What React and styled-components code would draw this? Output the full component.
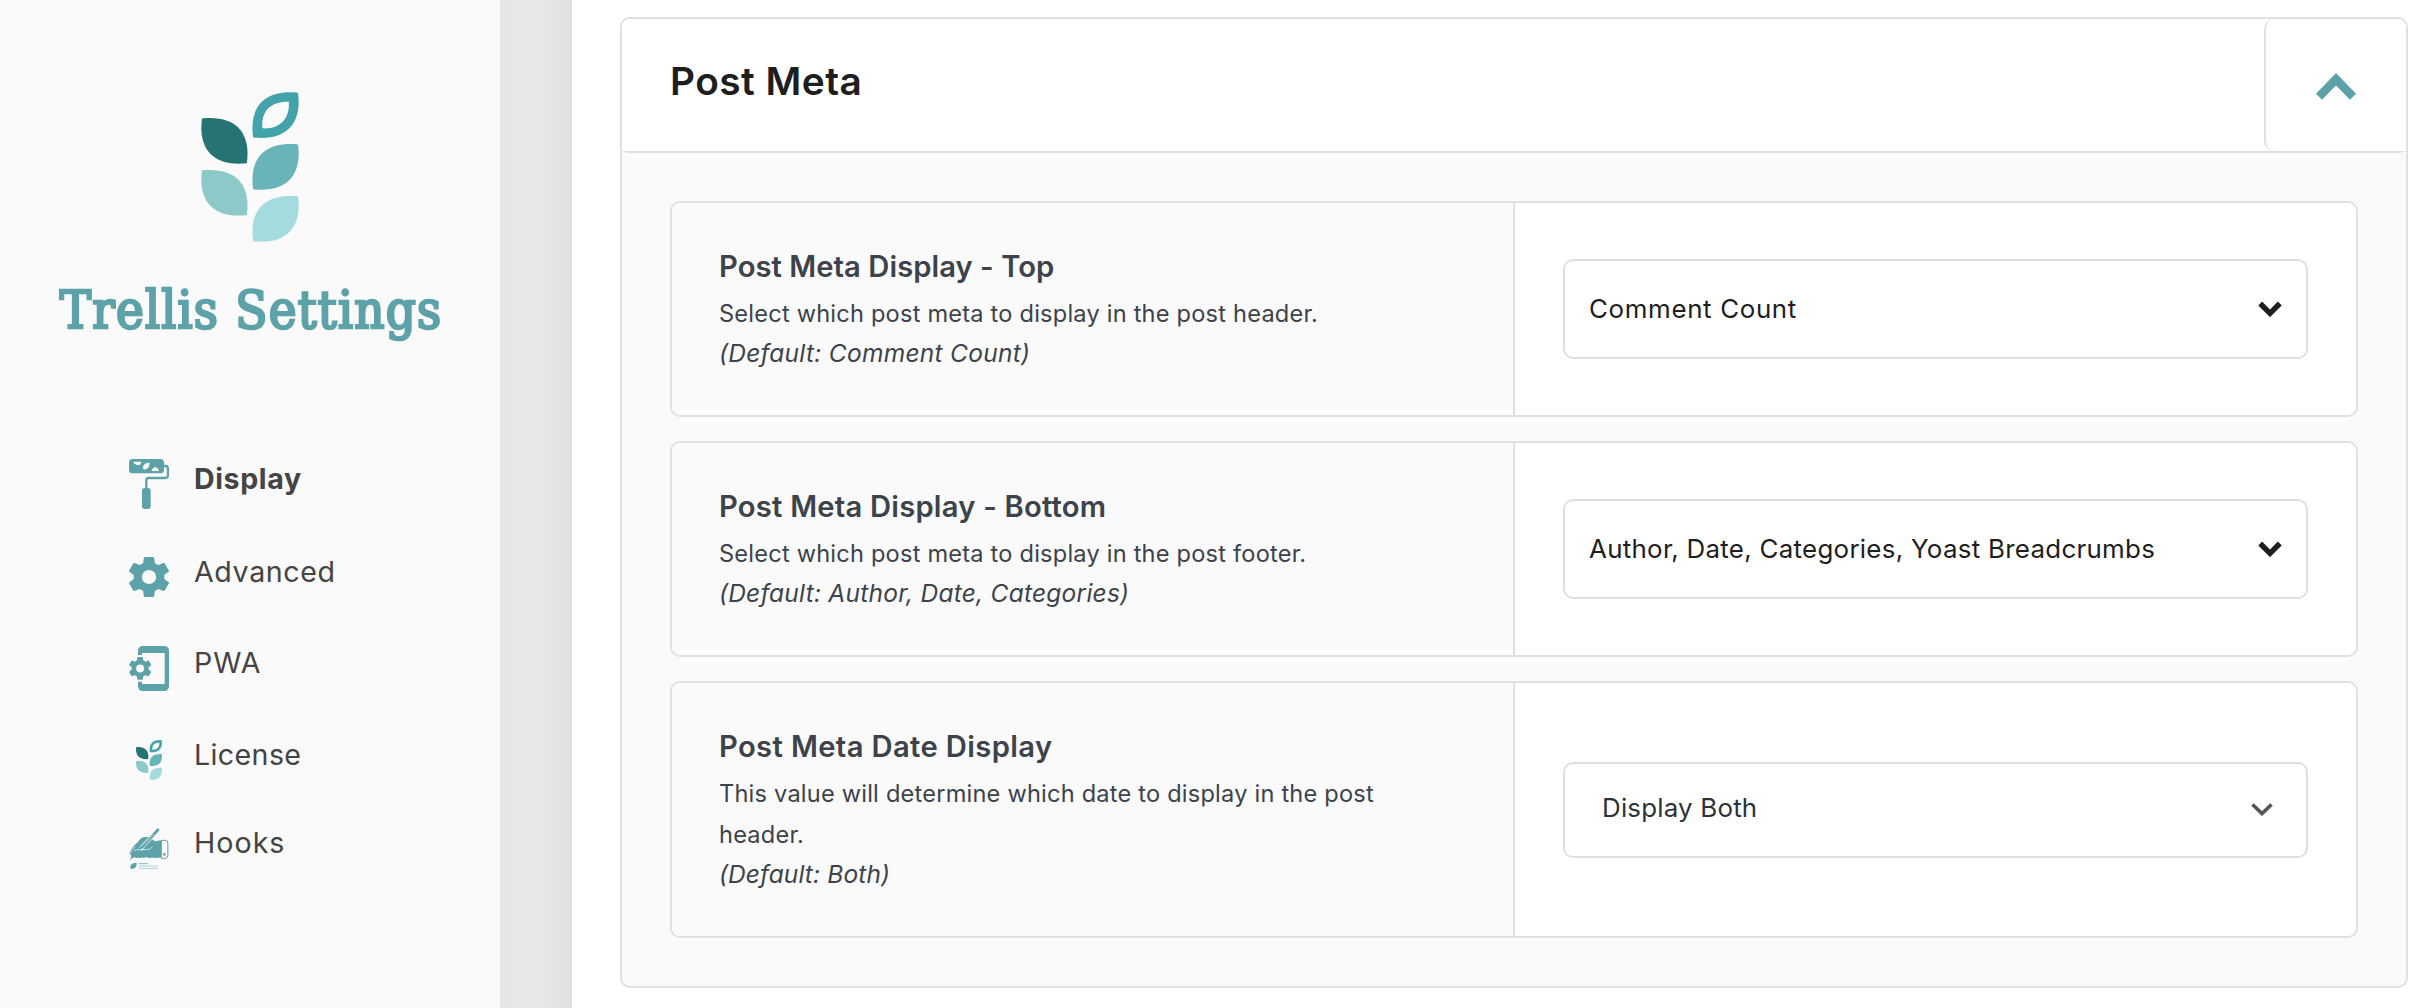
import React from "react";
import styled, { createGlobalStyle } from "styled-components";

const sans = '"Inter", "Open Sans", sans-serif';
const slab = '"DejaVu Serif Condensed", "DejaVu Serif", serif';
const teal = "#5da2a9";
const line = "#e0e0e0";
const soft = "#fafafa";

const GlobalStyle = createGlobalStyle`
  *, *::before, *::after { box-sizing: border-box; }
  body { margin: 0; background: #fff; font-family: ${sans}; }
  h1, h2, h3, p, ul { margin: 0; padding: 0; }
  svg { display: block; }
`;

const Page = styled.div`
  display: flex;
  height: 1008px;
  overflow: hidden;
`;

const Sidebar = styled.aside`
  display: flex;
  flex-direction: column;
  align-items: center;
  flex: 0 0 500px;
  padding-top: 92px;
  background: ${soft};
`;

const Gutter = styled.div`
  flex: 0 0 72px;
  background: linear-gradient(90deg, #e6e6e6 0%, #e8e8e8 50%, #e5e5e5 70%, #e0e0e0 100%);
`;

const BrandTitle = styled.h1`
  margin-top: 38px;
  padding-left: 2px;
  color: ${teal};
  font: 400 52.2px/60px ${slab};
  letter-spacing: 1.25px;
  -webkit-text-stroke: 2.5px ${teal};
  white-space: nowrap;
`;

const Nav = styled.ul`
  display: flex;
  flex-direction: column;
  align-self: stretch;
  padding: 119px 0 0 129px;
  list-style: none;
`;

const NavItem = styled.li`
  display: flex;
  align-items: center;
  gap: 25px;
  margin-bottom: ${(p) => p.$space}px;
`;

const NavIcon = styled.span`
  display: flex;
  justify-content: center;
  flex: 0 0 40px;
`;

const NavLabel = styled.span`
  padding-bottom: 11px;
  color: #444;
  font-size: 28.6px;
  line-height: 28px;
  font-weight: ${(p) => (p.$active ? 700 : 400)};
  letter-spacing: ${(p) => p.$track}px;
`;

const Main = styled.main`
  flex: 1;
  min-width: 0;
  padding: 17px 22px 20px 48px;
`;

const Panel = styled.section`
  border: 2px solid ${line};
  border-radius: 10px;
  background: ${soft};
  overflow: hidden;
`;

const HeaderBack = styled.div`
  background: #fff;
`;

const PanelHeader = styled.header`
  display: flex;
  justify-content: space-between;
  height: 134px;
  padding-left: 48px;
  border-bottom: 2px solid ${line};
  border-radius: 0 0 12px 12px / 0 0 2px 2px;
`;

const PanelTitle = styled.h2`
  align-self: center;
  padding-bottom: 8px;
  color: #1e1e1e;
  font-size: 38.8px;
  line-height: 48px;
  font-weight: 600;
  letter-spacing: 0.48px;
`;

const Toggle = styled.button`
  display: flex;
  align-items: center;
  justify-content: center;
  width: 142px;
  padding: 3px 0 0;
  border: 0;
  border-left: 2px solid ${line};
  border-radius: 10px;
  background: none;
`;

const PanelBody = styled.div`
  display: flex;
  flex-direction: column;
  gap: 24px;
  padding: 48px;
`;

const Row = styled.div`
  display: grid;
  grid-template-columns: 843px 1fr;
  border: 2px solid ${line};
  border-radius: 10px;
  background: #fff;
  overflow: hidden;
`;

const Description = styled.div`
  padding: 48px 72px 43px 47px;
  border-right: 2px solid ${line};
  background: ${soft};
  color: #3c434a;
`;

const RowTitle = styled.h3`
  margin-bottom: 10px;
  font-size: 29.2px;
  line-height: 32px;
  font-weight: 600;
  letter-spacing: ${(p) => p.$track}px;
`;

const Help = styled.p`
  font-size: 23.6px;
  line-height: 41px;
  letter-spacing: 0.21px;
`;

const Default = styled.p`
  font-size: 24.5px;
  line-height: 38px;
  font-style: italic;
  letter-spacing: ${(p) => p.$track}px;
`;

const Control = styled.div`
  display: flex;
  align-items: center;
  padding: 0 48px;
`;

const Select = styled.div`
  display: flex;
  align-items: center;
  justify-content: space-between;
  flex: 1;
  height: ${(p) => (p.$native ? 96 : 100)}px;
  padding: ${(p) => (p.$native ? "0 33px 0 37px" : "0 24px")};
  border: 2px solid ${line};
  border-radius: 10px;
  background: #fff;
  color: ${(p) => (p.$native ? "#2c3338" : "#1e1e1e")};
`;

const Value = styled.span`
  padding-bottom: ${(p) => (p.$native ? 3 : 1)}px;
  font-size: 25.9px;
  line-height: 32px;
  letter-spacing: ${(p) => p.$track}px;
  white-space: nowrap;
`;

const LEAF = "M640 202.5C628 120 665 57 774.5 68C786 150 750 214 640 202.5Z";

const TrellisMark = ({ width, height }) => (
  <svg width={width} height={height} viewBox="484 66 293 450">
    <path
      fill="#43a3aa"
      fillRule="evenodd"
      d={LEAF + "M667.500 175C664 125 690 94 747 95.500C750 145 722 178 667.500 175Z"}
    />
    <path fill="#68b4b9" d={LEAF} transform="translate(0 155.500)" />
    <path fill="#a4dbde" d={LEAF} transform="translate(0 311)" />
    <path fill="#257473" d={LEAF} transform="translate(1261 77.500) scale(-1 1)" />
    <path fill="#8ec9ca" d={LEAF} transform="translate(1261 233) scale(-1 1)" />
  </svg>
);

const COG =
  "M12,15.5A3.5,3.5 0 0,1 8.5,12A3.5,3.5 0 0,1 12,8.5A3.5,3.5 0 0,1 15.5,12A3.5,3.5 0 0,1 12,15.5M19.43,12.97C19.47,12.65 19.5,12.33 19.5,12C19.5,11.67 19.47,11.34 19.43,11L21.54,9.37C21.73,9.22 21.78,8.95 21.66,8.73L19.66,5.27C19.54,5.05 19.27,4.96 19.05,5.05L16.56,6.05C16.04,5.66 15.5,5.32 14.87,5.07L14.5,2.42C14.46,2.18 14.25,2 14,2H10C9.75,2 9.54,2.18 9.5,2.42L9.13,5.07C8.5,5.32 7.96,5.66 7.44,6.05L4.95,5.05C4.73,4.96 4.46,5.05 4.34,5.27L2.34,8.73C2.21,8.95 2.27,9.22 2.46,9.37L4.57,11C4.53,11.34 4.5,11.67 4.5,12C4.5,12.33 4.53,12.65 4.57,12.97L2.46,14.63C2.27,14.78 2.21,15.05 2.34,15.27L4.34,18.73C4.46,18.95 4.73,19.03 4.95,18.95L7.44,17.94C7.96,18.34 8.5,18.68 9.13,18.93L9.5,21.58C9.54,21.82 9.75,22 10,22H14C14.25,22 14.46,21.82 14.5,21.58L14.87,18.93C15.5,18.67 16.04,18.34 16.56,17.94L19.05,18.95C19.27,19.03 19.54,18.95 19.66,18.73L21.66,15.27C21.78,15.05 21.73,14.78 21.54,14.63L19.43,12.97Z";

const RollerIcon = () => (
  <svg width="40" height="50" viewBox="57 57 120 150">
    <rect x="57" y="57" width="105" height="43" rx="11" fill={teal} />
    <path d="M70 65H94C94 72 89 76 82 75C77 75 77 71 72 70Z" fill={soft} />
    <path d="M100 88C97 76 105 68 118 68.500C120 81 112 90 100 88Z" fill={soft} />
    <path d="M125 93C126 86 131 81.500 136 81.500C142 81.500 146 87 147 93Z" fill={soft} />
    <path
      d="M162 78H166Q174 78 174 86V106Q174 114 166 114H116Q109 114 109 121V146"
      fill="none"
      stroke={teal}
      strokeWidth="7"
    />
    <rect x="96" y="144" width="26" height="63" rx="8" fill={teal} />
  </svg>
);

const GearIcon = () => (
  <svg width="40" height="40" viewBox="2.27 2 19.46 20" preserveAspectRatio="none">
    <path d={COG} fill={teal} />
  </svg>
);

const PhoneIcon = () => (
  <svg width="40" height="45" viewBox="57 48 120 135">
    <path
      fill={teal}
      d="M84 75V62a14 14 0 0 1 14-14H163a14 14 0 0 1 14 14V169a14 14 0 0 1-14 14H98a14 14 0 0 1-14-14V155H96V162H164V69H96V75Z"
    />
    <path d={COG} fill={teal} transform="translate(49.600 74.500) scale(3.400)" />
  </svg>
);

const SigningIcon = () => (
  <svg width="40" height="41" viewBox="57 594 120 123">
    <path
      fill={teal}
      d="M60 692L64 677L58 670C62 658 74 645 83 637C90 628 96 620 104 621C110 623 114 619 121 624L135 634L153 631V682C140 686 128 682 118 684L107 681C102 688 96 678 90 685C85 681 80 687 74 682L66 685Z"
    />
    <path d="M147 597L90 658" stroke={soft} strokeWidth="12" />
    <path d="M146 597L100 648L84 661" fill="none" stroke={teal} strokeWidth="8" />
    <path d="M131 612L104 642" stroke={soft} strokeWidth="1.500" />
    <path d="M72 663L79 659H113Q121 659 127 650" fill="none" stroke={soft} strokeWidth="2" />
    <path d="M60 672Q64 658 76 650" fill="none" stroke={soft} strokeWidth="2" />
    <path
      d="M154 631H166Q173.500 631 173.500 639V677Q173.500 685 166 685H154Z"
      fill={soft}
      stroke={teal}
      strokeWidth="3"
    />
    <circle cx="163" cy="673" r="4" fill={teal} />
    <path d="M61 716C59 704 67 697 80 699C81 711 74 718 61 716Z" fill={teal} />
    <path d="M87 701H114" stroke={teal} strokeOpacity=".75" strokeWidth="3" />
    <path d="M87 708H144M87 715H144" stroke={teal} strokeOpacity=".48" strokeWidth="3" />
  </svg>
);

const CollapseIcon = () => (
  <svg width="40" height="27" viewBox="0 0 40 27">
    <path d="M20 0L40 20.700L34 26.700L20 12.400L6 26.700L0 20.700Z" fill={teal} />
  </svg>
);

const BoldChevron = () => (
  <svg width="24" height="16" viewBox="0 0 24 16">
    <path d="M2.200 2.500L12 12.300L21.800 2.500" fill="none" stroke="#1e1e1e" strokeWidth="5.400" />
  </svg>
);

const ThinChevron = () => (
  <svg width="22" height="13" viewBox="0 0 22 13">
    <path d="M1.500 1.500L11 10.600L20.500 1.500" fill="none" stroke="#555" strokeWidth="3.600" />
  </svg>
);

const navigation = [
  { label: "Display", icon: <RollerIcon />, active: true, track: 0.6, space: 48 },
  { label: "Advanced", icon: <GearIcon />, track: 0.61, space: 49 },
  { label: "PWA", icon: <PhoneIcon />, track: 1, space: 49 },
  { label: "License", icon: <TrellisMark width={26} height={40} />, track: 0.38, space: 48 },
  { label: "Hooks", icon: <SigningIcon />, track: 1.03, space: 0 },
];

const settings = [
  {
    title: "Post Meta Display - Top",
    titleTrack: 0.05,
    help: "Select which post meta to display in the post header.",
    fallback: "(Default: Comment Count)",
    fallbackTrack: 0.28,
    value: "Comment Count",
    valueTrack: 0.65,
  },
  {
    title: "Post Meta Display - Bottom",
    titleTrack: 0.22,
    help: "Select which post meta to display in the post footer.",
    fallback: "(Default: Author, Date, Categories)",
    fallbackTrack: 0.24,
    value: "Author, Date, Categories, Yoast Breadcrumbs",
    valueTrack: 0.28,
  },
  {
    title: "Post Meta Date Display",
    titleTrack: 0.37,
    help: "This value will determine which date to display in the post header.",
    fallback: "(Default: Both)",
    fallbackTrack: 0.13,
    value: "Display Both",
    valueTrack: 0.2,
    native: true,
  },
];

export default function App() {
  return (
    <Page>
      <GlobalStyle />
      <Sidebar>
        <TrellisMark width={98} height={150} />
        <BrandTitle>Trellis Settings</BrandTitle>
        <Nav>
          {navigation.map((item) => (
            <NavItem key={item.label} $space={item.space}>
              <NavIcon>{item.icon}</NavIcon>
              <NavLabel $active={item.active} $track={item.track}>
                {item.label}
              </NavLabel>
            </NavItem>
          ))}
        </Nav>
      </Sidebar>
      <Gutter />
      <Main>
        <Panel>
          <HeaderBack>
            <PanelHeader>
              <PanelTitle>Post Meta</PanelTitle>
              <Toggle aria-expanded="true">
                <CollapseIcon />
              </Toggle>
            </PanelHeader>
          </HeaderBack>
          <PanelBody>
            {settings.map((s) => (
              <Row key={s.title}>
                <Description>
                  <RowTitle $track={s.titleTrack}>{s.title}</RowTitle>
                  <Help>{s.help}</Help>
                  <Default $track={s.fallbackTrack}>{s.fallback}</Default>
                </Description>
                <Control>
                  <Select $native={s.native}>
                    <Value $native={s.native} $track={s.valueTrack}>
                      {s.value}
                    </Value>
                    {s.native ? <ThinChevron /> : <BoldChevron />}
                  </Select>
                </Control>
              </Row>
            ))}
          </PanelBody>
        </Panel>
      </Main>
    </Page>
  );
}
